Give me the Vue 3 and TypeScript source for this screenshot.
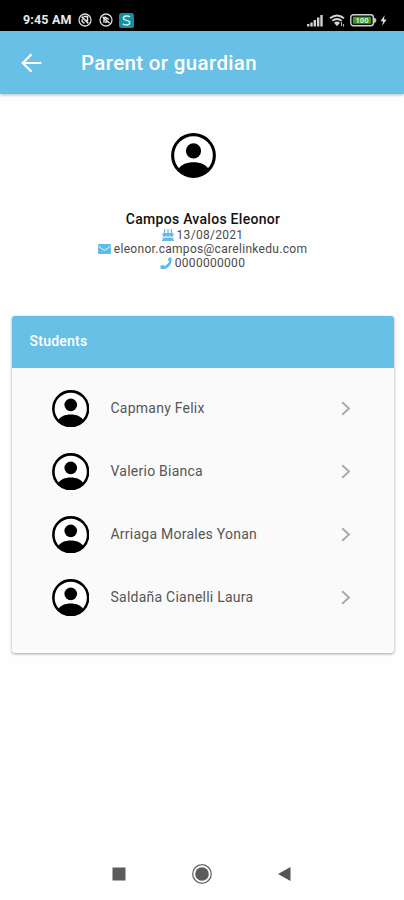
<script setup lang="ts">
import { defineComponent, h } from 'vue'

interface Student {
  id: number
  name: string
}

const students: Student[] = [
  { id: 1, name: 'Capmany Felix' },
  { id: 2, name: 'Valerio Bianca' },
  { id: 3, name: 'Arriaga Morales Yonan' },
  { id: 4, name: 'Saldaña Cianelli Laura' },
]

const Avatar = defineComponent({
  name: 'Avatar',
  render() {
    return h('svg', { viewBox: '0 0 44 44', 'aria-hidden': 'true' }, [
      h('circle', { cx: 22, cy: 22, r: 20.4, fill: '#fff', stroke: '#000', 'stroke-width': 3 }),
      h('circle', { cx: 22, cy: 17.5, r: 7.4, fill: '#000' }),
      h('path', { d: 'M7 36C9 31 15.500 28.600 22 28.600S35 31 37 36A20.500 20.500 0 0 1 7 36Z', fill: '#000' }),
    ])
  },
})
</script>

<template>
  <div class="screen">
    <div class="status">
      <span class="clock">9:45 AM</span>
      <svg class="mute" viewBox="0 0 14 14">
        <circle cx="7" cy="7" r="6" fill="none" stroke="#d8d8d8" stroke-width="1.3" />
        <path d="M3.600 3.600L10.400 10.400M4.200 6.200V8.500L6.500 10.300M5.500 3.600H9.500V8.300" fill="none" stroke="#e5e5e5" stroke-width="1.500" />
      </svg>
      <svg class="mute" viewBox="0 0 14 14">
        <circle cx="7" cy="7" r="6" fill="none" stroke="#d8d8d8" stroke-width="1.3" />
        <path d="M3.500 3.700L10.600 10.200M5 9.800V5.500M5.500 3.800L9.800 6.300M6.200 9.500L8 8.500" fill="none" stroke="#e5e5e5" stroke-width="1.500" />
      </svg>
      <svg class="app" viewBox="0 0 15 15">
        <rect width="15" height="15" rx="2.500" fill="#168da3" />
        <path d="M11 4C9.500 2.500 4.300 2.600 4.400 5.200C4.500 8 10.800 6.800 10.800 9.700C10.800 12.500 5.300 12.600 3.700 10.800" fill="none" stroke="#c9f3f7" stroke-width="1.400" />
      </svg>
      <span class="spacer"></span>
      <svg class="signal" viewBox="0 0 16 13">
        <path d="M0 10h2.400v2.500H0zM3.300 8.500h2.400v4H3.300zM6.600 6H9v6.500H6.600zM10 3.500h2.400v9H10zM13.300 1h2.400v11.500h-2.400z" fill="#d2d2d2" />
      </svg>
      <svg class="wifi" viewBox="0 0 17 13">
        <path d="M1 4.300Q8 -1.200 15 4.300M3.300 6.800Q8 3.200 12.700 6.800" fill="none" stroke="#d5d5d5" stroke-width="1.900" />
        <path d="M5 8.700Q8 6.500 11 8.700L8 12.300Z" fill="#d5d5d5" />
        <path d="M12.500 8v4M14.500 10v2.500" stroke="#bbb" stroke-width="1.100" />
      </svg>
      <svg class="battery" viewBox="0 0 27 13">
        <rect x=".8" y=".8" width="22.500" height="11" rx="2.500" fill="#111" stroke="#d0d0d0" stroke-width="1.400" />
        <rect x="3" y="2.800" width="18" height="7" rx="1" fill="#389b24" />
        <path d="M24 3.500l2.200 1.500v2.800L24 9.300" fill="#c5c5c5" />
        <text x="12" y="9.300" text-anchor="middle" class="charge">100</text>
      </svg>
      <svg class="bolt" viewBox="0 0 8 12"><path d="M5.300 0L0.500 6.800H3.500L2.500 12L7.500 4.800H4.500Z" fill="#e1e1e1" /></svg>
    </div>

    <header class="bar">
      <svg class="back" viewBox="0 0 22 20">
        <path d="M20.500 10H2M10.500 1.300L1.800 10l8.700 8.700" fill="none" stroke="#fff" stroke-width="2.200" />
      </svg>
      <h1>Parent or guardian</h1>
    </header>

    <section class="profile">
      <Avatar class="portrait" />
      <h2>Campos Avalos Eleonor</h2>
      <p class="date">
        <svg class="cake" viewBox="0 0 12 12">
          <path d="M2 0h1.200v4H2zM5.400 0h1.200v4H5.400zM8.800 0H10v4H8.800zM.6 4h10.800v3.100L9.600 8 7.800 7 6 8 4.200 7 2.400 8 .6 7.200zM.6 8.500l1.800.6 1.800-.9L6 9.100l1.800-.9 1.800.9 1.800-.6V11H.6zM0 11h12v1H0z" fill="#62bce5" />
        </svg>
        <span>13/08/2021</span>
      </p>
      <p class="email">
        <svg class="mail" viewBox="0 0 13 10">
          <rect width="13" height="10" rx="1.200" fill="#5fbce6" />
          <path d="M.3 2.200L6.500 6.400l6.200-4.200" fill="none" stroke="#e1f4fc" stroke-width="1" />
        </svg>
        <span>eleonor.campos@carelinkedu.com</span>
      </p>
      <p class="phone">
        <svg class="handset" viewBox="0 0 12 12">
          <path d="M9 .2L11.700.9Q12.100 7 8.200 10.200T.9 11.700L.2 9.100L3.100 7.800L4.400 9.300Q7.900 7.500 9.300 4.400L7.800 3.100Z" fill="#5fbce6" />
        </svg>
        <span>0000000000</span>
      </p>
    </section>

    <section class="card">
      <h3>Students</h3>
      <ul>
        <li v-for="student in students" :key="student.id">
          <Avatar class="thumb" />
          <span class="name">{{ student.name }}</span>
          <svg class="chevron" viewBox="0 0 10 15">
            <path d="M1.200 1.200L8 7.500L1.200 13.800" fill="none" stroke="#a9a9a9" stroke-width="1.900" />
          </svg>
        </li>
      </ul>
    </section>

    <nav class="nav">
      <svg viewBox="0 0 22 22"><rect x="4.500" y="4.500" width="13" height="13" fill="#5b5b5b" /></svg>
      <svg viewBox="0 0 22 22">
        <circle cx="11" cy="11" r="9.300" fill="none" stroke="#666" stroke-width="1.300" />
        <circle cx="11" cy="11" r="6.800" fill="#5b5b5b" />
      </svg>
      <svg viewBox="0 0 22 22"><path d="M4 11L16.500 4v14Z" fill="#555" /></svg>
    </nav>
  </div>
</template>

<style>
body {
  margin: 0;
  background: #fff;
}
</style>

<style scoped>
.screen {
  display: flex;
  flex-direction: column;
  width: 404px;
  height: 900px;
  overflow: hidden;
  background: #fefefe;
  font-family: Roboto, sans-serif;
}
svg {
  display: block;
  flex: none;
}
h1, h2, h3, p, ul {
  margin: 0;
  padding: 0;
}
.status {
  display: flex;
  align-items: center;
  flex: none;
  box-sizing: border-box;
  height: 31px;
  padding: 9px 17px 0 23px;
  background: #000;
}
.clock {
  width: 55px;
  color: #e9e9e9;
  font-size: 12.500px;
  font-weight: 700;
  line-height: 14px;
  letter-spacing: 0.15px;
  white-space: nowrap;
}
.mute {
  width: 14px;
  height: 14px;
  margin-right: 6.500px;
}
.app {
  width: 15px;
  height: 15px;
}
.spacer {
  flex: 1;
}
.signal {
  width: 16px;
  height: 13px;
  margin-right: 6px;
}
.wifi {
  width: 17px;
  height: 13px;
  margin-right: 4px;
}
.battery {
  width: 27px;
  height: 13px;
  margin-right: 3px;
}
.charge {
  fill: #d9f7cf;
  font-size: 7.500px;
  font-weight: 700;
}
.bolt {
  width: 7px;
  height: 11px;
}
.bar {
  display: flex;
  align-items: center;
  flex: none;
  box-sizing: border-box;
  height: 63px;
  padding: 1px 21px 0;
  background: #68c0e7;
  box-shadow: 0 1px 3px rgba(0, 0, 0, 0.28);
}
.back {
  width: 22px;
  height: 20px;
}
h1 {
  margin-left: 38px;
  color: #fff;
  font-size: 20.500px;
  font-weight: 500;
  line-height: 26px;
  letter-spacing: 0.35px;
  white-space: nowrap;
}
.profile {
  display: flex;
  flex-direction: column;
  align-items: center;
  flex: none;
  box-sizing: border-box;
  height: 222px;
  padding-top: 39px;
}
.portrait {
  width: 45px;
  height: 45px;
  margin-right: 17px;
}
h2 {
  margin: 33px 0 0 2px;
  color: #111;
  font-size: 14px;
  font-weight: 500;
  line-height: 17px;
  letter-spacing: 0.28px;
}
p {
  display: flex;
  align-items: center;
  gap: 2.500px;
  height: 14px;
  margin-left: 1.500px;
  color: #4b4b4b;
  font-size: 12px;
  line-height: 14px;
  letter-spacing: 0.3px;
}
.cake {
  width: 12px;
  height: 12px;
}
.mail {
  width: 13px;
  height: 10px;
}
.handset {
  width: 12px;
  height: 12px;
}
.card {
  flex: none;
  height: 337px;
  margin: 0 10px 0 12px;
  overflow: hidden;
  border-radius: 3px;
  background: #fafafa;
  box-shadow: 0 1px 3px rgba(0, 0, 0, 0.38);
}
h3 {
  height: 52px;
  padding-left: 17.500px;
  background: #68c0e7;
  color: #fff;
  font-size: 14px;
  font-weight: 500;
  line-height: 51px;
  letter-spacing: 0.25px;
}
ul {
  padding: 9px 43px 0 39.500px;
  list-style: none;
}
li {
  display: flex;
  align-items: center;
  height: 63px;
}
.thumb {
  width: 37.500px;
  height: 37.500px;
}
.name {
  flex: 1;
  margin-left: 21.500px;
  color: #555;
  font-size: 14px;
  line-height: 17px;
  letter-spacing: 0.24px;
}
.chevron {
  width: 10px;
  height: 15px;
}
.nav {
  display: flex;
  justify-content: space-between;
  margin-top: auto;
  padding: 0 108px 15.500px 107.500px;
}
.nav svg {
  width: 22px;
  height: 22px;
}
</style>
